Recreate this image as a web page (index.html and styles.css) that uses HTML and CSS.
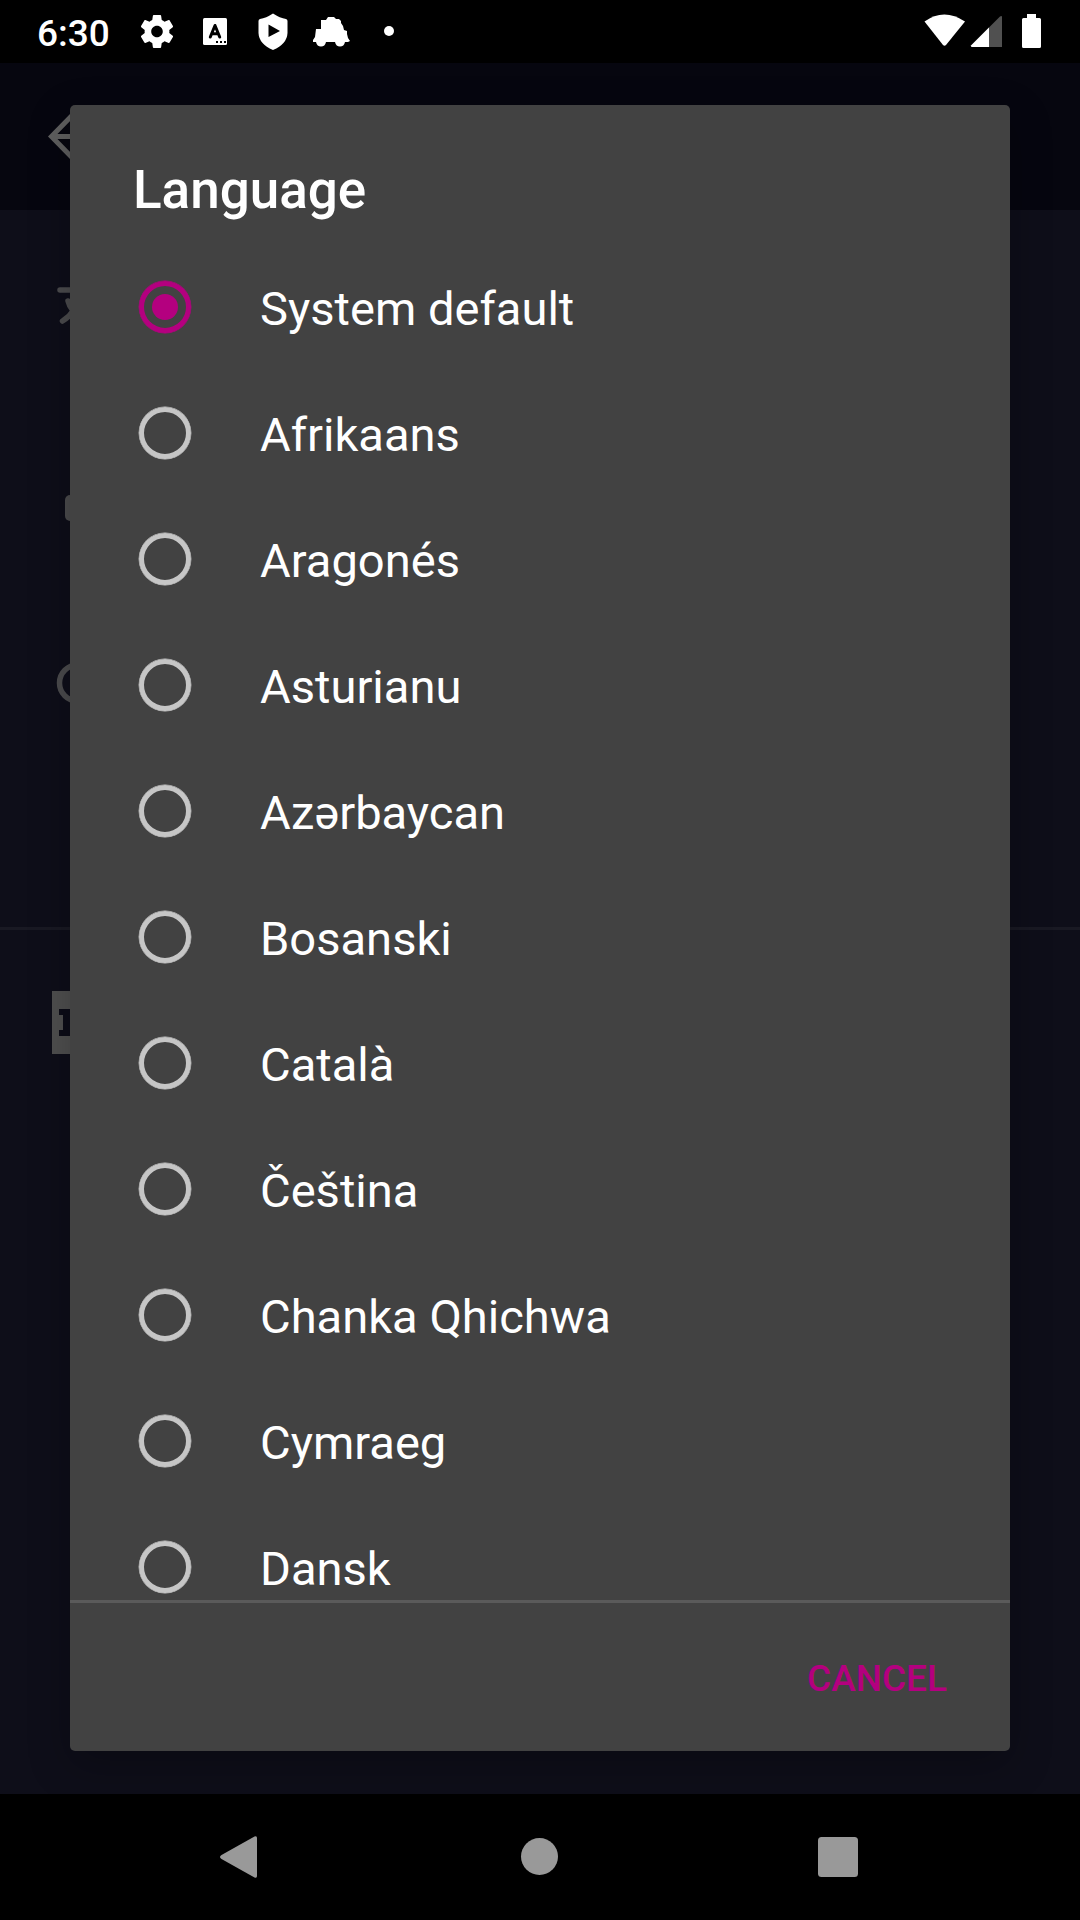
FILE: index.html
```html
<!DOCTYPE html>
<html lang="en">
<head>
<meta charset="utf-8">
<title>Language</title>
<link rel="stylesheet" href="styles.css">
</head>
<body>
<div class="screen">
  <header class="status">
    <span class="clock">6:30</span>
    <svg class="status-icons" width="270" height="63" viewBox="130 0 270 63" fill="#fff">
      <path transform="translate(137.2 11.7) scale(1.65)" d="M19.43 12.98c.04-.32.07-.64.07-.98s-.03-.66-.07-.98l2.11-1.65c.19-.15.24-.42.12-.64l-2-3.46c-.12-.22-.39-.3-.61-.22l-2.49 1c-.52-.4-1.08-.73-1.69-.98l-.38-2.65C14.46 2.18 14.25 2 14 2h-4c-.25 0-.46.18-.49.42l-.38 2.65c-.61.25-1.17.59-1.69.98l-2.49-1c-.23-.09-.49 0-.61.22l-2 3.46c-.13.22-.07.49.12.64l2.11 1.65c-.04.32-.07.65-.07.98s.03.66.07.98l-2.11 1.65c-.19.15-.24.42-.12.64l2 3.46c.12.22.39.3.61.22l2.49-1c.52.4 1.08.73 1.69.98l.38 2.65c.03.24.24.42.49.42h4c.25 0 .46-.18.49-.42l.38-2.65c.61-.25 1.17-.59 1.69-.98l2.49 1c.23.09.49 0 .61-.22l2-3.46c.12-.22.07-.49-.12-.64l-2.11-1.65zM12 15.5c-1.93 0-3.5-1.57-3.5-3.5s1.57-3.5 3.5-3.5 3.5 1.57 3.5 3.5-1.57 3.5-3.5 3.5z"/>
      <rect x="203" y="18" width="24" height="27" rx="1.5"/>
      <path d="M210.300 37L215 25.500L219.700 37M212 33.800H218" fill="none" stroke="#000" stroke-width="3" stroke-linecap="round" stroke-linejoin="round"/>
      <path d="M216 41h2v2h-2zM220 41h2v2h-2zM224 41h2v2h-2z" fill="#000"/>
      <path fill-rule="evenodd" d="M273 13.500Q280 18 286 19Q287.500 19.300 287.500 21V33Q287 44 273 50Q259 44 258.500 33V21Q258.500 19.300 260 19Q266 18 273 13.500ZM268.500 24.500V37L280 31Z"/>
      <path d="M321 20H326L328 17H334L336 19H339L341 21V23L343 26L344 30L347 31V34L348 38L350 41L348 42H345Q344 46.500 340 46.500Q336 46.500 335 42H326Q325 46.500 321 46.500Q317 46.500 316 42H313V40L315 37L316 29H321Z"/>
      <circle cx="389" cy="31" r="5"/>
    </svg>
    <svg class="system-icons" width="130" height="63" viewBox="920 0 130 63" fill="#fff">
      <path d="M924.500 21.500Q944 7.500 965 21.500L946 45Q944.500 46.500 943 45Z"/>
      <path d="M971 45.500L1000 16.500Q1002 15.500 1002 17V47H972Q970.500 46.500 971 45.500Z" fill="#505050"/>
      <path d="M989 27.500V47H972Q970.500 46.500 971 45.500Z"/>
      <path d="M1027 14h9v4h3.500q1.500 0 1.500 1.500v27q0 1.500-1.500 1.500h-16q-1.500 0-1.500-1.500v-27q0-1.500 1.500-1.500h3.500z"/>
    </svg>
  </header>

  <main class="app">
    <div class="toolbar">
      <svg width="42" height="48" viewBox="0 0 42 48" fill="none" stroke="#5f5f5f" stroke-width="5"><path d="M26.500 2L4.500 24.500L26.500 47M4.500 24.500H42"/></svg>
    </div>
    <div class="settings">
      <svg class="pref" width="50" height="60" viewBox="0 0 50 60" fill="none" stroke="#4b4b4d" stroke-width="5.500" stroke-linecap="round"><path d="M10 20H40M18 31Q20 41 36 53M12.500 51Q27 42 30 24"/></svg>
      <svg class="pref" width="50" height="60" viewBox="0 0 50 60" fill="#4b4b4d"><rect x="15" y="25" width="32" height="26" rx="5"/></svg>
      <svg class="pref" width="50" height="60" viewBox="0 0 50 60" fill="none" stroke="#4b4b4d" stroke-width="5.500"><circle cx="27.500" cy="33" r="18"/></svg>
    </div>
    <div class="about">
      <svg width="63" height="63" viewBox="0 0 63 63"><path fill="#4f4f4f" d="M0 0h63v63H0z"/><path fill="#0c0c17" d="M7 18h17v27H7v-6h4V24H7z"/></svg>
    </div>
  </main>

  <section class="dialog">
    <h1>Language</h1>
    <ul class="options">
      <li><i class="radio checked"></i><span>System default</span></li>
      <li><i class="radio"></i><span>Afrikaans</span></li>
      <li><i class="radio"></i><span>Aragonés</span></li>
      <li><i class="radio"></i><span>Asturianu</span></li>
      <li><i class="radio"></i><span>Azərbaycan</span></li>
      <li><i class="radio"></i><span>Bosanski</span></li>
      <li><i class="radio"></i><span>Català</span></li>
      <li><i class="radio"></i><span>Čeština</span></li>
      <li><i class="radio"></i><span>Chanka Qhichwa</span></li>
      <li><i class="radio"></i><span>Cymraeg</span></li>
      <li><i class="radio"></i><span>Dansk</span></li>
    </ul>
    <div class="actions"><button>CANCEL</button></div>
  </section>

  <nav class="navbar">
    <svg width="42" height="44" viewBox="0 0 42 44" fill="#999"><path d="M3.500 20L36.500 1.500Q39 .5 39 3V41Q39 43.500 36.500 42.500L3.500 24Q.5 22 3.500 20Z"/></svg>
    <svg width="38" height="38" viewBox="0 0 38 38" fill="#999"><circle cx="19.500" cy="18.500" r="18.500"/></svg>
    <svg width="40" height="40" viewBox="0 0 40 40" fill="#999"><rect width="40" height="40" rx="3.500"/></svg>
  </nav>
</div>
</body>
</html>
```

FILE: styles.css
```css
* { box-sizing: border-box; }
body { margin: 0; background: #000; font-family: Roboto, sans-serif; color: #fff; }
svg { display: block; flex: none; }
.screen { position: relative; width: 1080px; height: 1920px; display: flex; flex-direction: column; overflow: hidden; }

.status { height: 63px; background: #000; display: flex; align-items: center; padding: 0 30px 0 37px; }
.clock { width: 93px; font-size: 37px; font-weight: 500; line-height: 43px; padding-top: 3px; }
.system-icons { margin-left: auto; }

.app { flex: 1; background: #0e0e19; }
.toolbar { height: 147px; background: #06060f; padding: 49px 0 0 47px; }
.settings { height: 720px; border-bottom: 3px solid #191923; padding: 60px 0 0 50px; display: flex; flex-direction: column; }
.pref { margin-bottom: 140px; }
.pref:nth-child(2) { margin-bottom: 120px; }
.about { padding: 61px 0 0 52px; }

.dialog {
  position: absolute; left: 70px; top: 105px; width: 940px; height: 1646px;
  display: flex; flex-direction: column; background: #424242; border-radius: 5px;
  box-shadow: 0 14px 42px rgba(0, 0, 0, .25);
}
.dialog h1 { margin: 0; height: 139px; padding: 54px 63px 0; font-size: 53px; line-height: 62px; font-weight: 500; }
.options { margin: 0; padding: 0; height: 1356px; list-style: none; overflow: hidden; }
.options li { height: 126px; display: flex; align-items: center; gap: 69px; padding-left: 69px; font-size: 47.1px; line-height: 56px; }
.options span { padding-top: 4px; }
.radio { width: 52px; height: 52px; border: 5px solid #c6c6c6; border-radius: 50%; flex: none; box-shadow: 0 0 0 .4px #c6c6c6; }
.checked { display: grid; place-items: center; border-color: #b4007f; box-shadow: 0 0 0 .4px #b4007f; }
.checked::before { content: ""; width: 26px; height: 26px; border-radius: 50%; background: #b4007f; }
.actions { flex: 1; border-top: 3px solid #5a5a5a; display: flex; justify-content: flex-end; align-items: center; padding: 4px 63px 0; }
.actions button { border: 0; padding: 0; background: none; font: 500 37px/44px Roboto, sans-serif; color: #b4007f; }

.navbar { height: 126px; background: #000; display: flex; align-items: center; justify-content: space-between; padding: 0 222px 0 218px; }
```
